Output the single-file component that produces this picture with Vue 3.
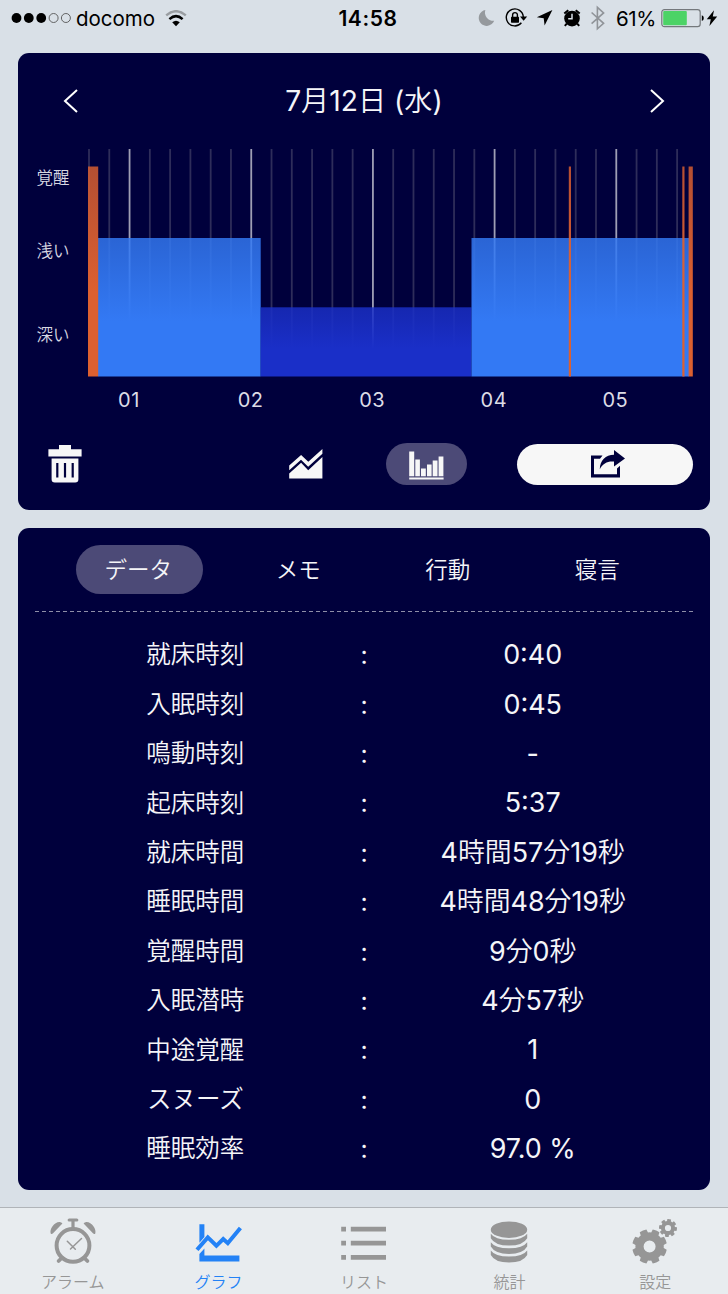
<script setup>
import { ref } from 'vue'

const tabs = ['データ', 'メモ', '行動', '寝言']
const activeTab = ref(0)

const rows = [
    { label: '就床時刻', value: '0:40' },
    { label: '入眠時刻', value: '0:45' },
    { label: '鳴動時刻', value: '-' },
    { label: '起床時刻', value: '5:37' },
    { label: '就床時間', value: '4時間57分19秒' },
    { label: '睡眠時間', value: '4時間48分19秒' },
    { label: '覚醒時間', value: '9分0秒' },
    { label: '入眠潜時', value: '4分57秒' },
    { label: '中途覚醒', value: '1' },
    { label: 'スヌーズ', value: '0' },
    { label: '睡眠効率', value: '97.0 %' }
]

// units are set a little lighter than the digits
const split = (text) => text.split(/([月日水時間分秒]+)/).filter(Boolean)
const isUnit = (part) => /[月日水時間分秒]/.test(part)

// one line every 10 minutes, the full hours are brighter
const gridLines = Array.from({ length: 30 }, (_, i) => ({
    x: 71 + i * 20.28,
    major: i % 6 === 2
}))

const hours = ['01', '02', '03', '04', '05'].map((text, i) => ({
    text,
    x: 111 + i * 121.6
}))

const levels = [
    { text: '覚醒', y: 43.5 },
    { text: '浅い', y: 116.5 },
    { text: '深い', y: 200.5 }
]

const bars = [
    { x: 80, width: 162.7, y: 98, type: 'light' },
    { x: 242.7, width: 210.8, y: 167.3, type: 'deep' },
    { x: 453.5, width: 217.5, y: 98, type: 'light' },
    { x: 70, width: 10.2, y: 26.5, type: 'awake' },
    { x: 550.8, width: 2.2, y: 26.5, type: 'awake' },
    { x: 664.3, width: 2.2, y: 26.5, type: 'awake' },
    { x: 670.6, width: 4.2, y: 26.5, type: 'awake' }
]

const gear = (cx, cy, outer, inner, hole, offset) => {
    const point = (r, deg) => {
        const a = deg * Math.PI / 180
        return `${(cx + r * Math.cos(a)).toFixed(2)} ${(cy + r * Math.sin(a)).toFixed(2)}`
    }
    let d = ''
    for (let i = 0; i < 8; i++) {
        const a = offset + i * 45
        d += `${i ? 'L' : 'M'}${point(inner, a - 16)}L${point(outer, a - 12)}`
        d += `A${outer} ${outer} 0 0 1 ${point(outer, a + 12)}L${point(inner, a + 16)}`
        d += `A${inner} ${inner} 0 0 1 ${point(inner, a + 29)}`
    }
    d += `ZM${cx - hole} ${cy}a${hole} ${hole} 0 1 0 ${hole * 2} 0a${hole} ${hole} 0 1 0 ${-hole * 2} 0Z`
    return d
}

const gears = [
    gear(21.6, 31.5, 17.4, 14.2, 6, 22.5),
    gear(40, 13, 9, 7, 3.1, 8)
]

const menu = [
    { name: 'alarm', label: 'アラーム' },
    { name: 'graph', label: 'グラフ' },
    { name: 'list', label: 'リスト' },
    { name: 'stats', label: '統計' },
    { name: 'settings', label: '設定' }
]
const activeMenu = ref('graph')
</script>

<template>
    <div class="app">
        <header class="status">
            <div class="status__left">
                <svg width="62" height="14" viewBox="0 0 62 14">
                    <circle cx="5.5" cy="7" r="4.9" />
                    <circle cx="17.8" cy="7" r="4.9" />
                    <circle cx="30.2" cy="7" r="4.9" />
                    <circle cx="42.6" cy="7" r="4.5" class="status__ring" />
                    <circle cx="54.9" cy="7" r="4.5" class="status__ring" />
                </svg>
                <span class="status__carrier">docomo</span>
                <svg width="22" height="17" viewBox="0 0 22 17">
                    <path d="M1.2 5.4Q11-3 20.8 5.4" fill="none" stroke="#999da1" stroke-width="2.4" />
                    <path d="M4.4 9.1Q11 3.2 17.6 9.1" fill="none" stroke="#000" stroke-width="2.5" />
                    <path d="M7.2 12.3Q11 9 14.8 12.3L11 16.2Z" />
                </svg>
            </div>
            <div class="status__time">14:58</div>
            <div class="status__right">
                <svg class="status__icons" width="130" height="26" viewBox="0 0 130 26">
                    <path d="M7.4 5A8 8 0 1 0 16.2 15.8A8.2 8.2 0 0 1 7.4 5Z" fill="#95999d" />
                    <path d="M43.4 17.8A8.5 8.5 0 1 1 45.3 12" fill="none" stroke="#000" stroke-width="1.4" />
                    <path d="M42 11.6h7.2l-3.6 4.2Z" />
                    <rect x="33" y="11.7" width="8" height="6" rx=".6" />
                    <path d="M34.6 12v-2a2.4 2.4 0 0 1 4.8 0v2" fill="none" stroke="#000" stroke-width="1.4" />
                    <path d="M74.4 5L66.6 20.6L65.7 13.2L58.8 12.2Z" />
                    <circle cx="94" cy="13.6" r="7.8" />
                    <path d="M94 8.8v5h-3.8" fill="none" stroke="#d9e0e7" stroke-width="1.5" />
                    <path d="M88.8 18.6l-2 2.3M99.2 18.6l2 2.3M86.3 8.6l4-3.4M101.7 8.6l-4-3.4" stroke="#000" stroke-width="2" />
                    <path d="M113.6 7.5l12 10.8-6.2 5.5V2.4l6.2 5.5-12 10.8" fill="none" stroke="#909499" stroke-width="1.6" />
                </svg>
                <span class="status__percent">61%</span>
                <svg width="58" height="20" viewBox="0 0 58 20">
                    <rect x=".8" y="1.6" width="38.4" height="17" rx="2.6" fill="none" stroke="#74787c" stroke-width="1.2" />
                    <rect x="2.2" y="3" width="23.6" height="14.2" rx="1" fill="#4cd366" />
                    <path d="M40.8 7.2q2 .6 2 2.9t-2 2.9Z" />
                    <path d="M53 2.2L45.8 11.2h4L48.4 17.9L56.2 8.6h-4.4Z" />
                </svg>
            </div>
        </header>

        <section class="card card--graph">
            <div class="date">
                <svg width="16" height="26" viewBox="0 0 16 26">
                    <path d="M14 2L2 13l12 11" />
                </svg>
                <span class="date__text"><span v-for="(part, i) in split('7月12日 (水)')" :key="i" :class="{ unit: isUnit(part) }">{{ part }}</span></span>
                <svg width="16" height="26" viewBox="0 0 16 26">
                    <path d="M2 2l12 11L2 24" />
                </svg>
            </div>

            <svg class="chart" width="692" height="290" viewBox="0 0 692 290">
                <defs>
                    <linearGradient id="light" x1="0" y1="0" x2="0" y2="1">
                        <stop offset="0" stop-color="#3379f4" stop-opacity=".83" />
                        <stop offset=".6" stop-color="#3379f4" />
                    </linearGradient>
                    <linearGradient id="deep" x1="0" y1="0" x2="0" y2="1">
                        <stop offset="0" stop-color="#1a2fc8" stop-opacity=".83" />
                        <stop offset=".6" stop-color="#1a2fc8" />
                    </linearGradient>
                    <linearGradient id="awake" x1="0" y1="0" x2="0" y2="1">
                        <stop offset="0" stop-color="#dc6030" stop-opacity=".82" />
                        <stop offset=".6" stop-color="#dc6030" />
                    </linearGradient>
                </defs>
                <rect
                    v-for="line in gridLines"
                    :key="line.x"
                    :x="line.x - 0.9"
                    y="9"
                    width="1.8"
                    height="226"
                    :fill="line.major ? '#fff' : '#fffbe6'"
                    :fill-opacity="line.major ? 0.62 : 0.18"
                />
                <rect
                    v-for="bar in bars"
                    :key="bar.x"
                    :x="bar.x"
                    :y="bar.y"
                    :width="bar.width"
                    :height="236.5 - bar.y"
                    :fill="`url(#${bar.type})`"
                />
                <text v-for="level in levels" :key="level.text" class="chart__level" x="18.5" :y="level.y">{{ level.text }}</text>
                <text v-for="hour in hours" :key="hour.text" class="chart__hour" :x="hour.x" y="267.4">{{ hour.text }}</text>
            </svg>

            <div class="tools">
                <svg class="tools__trash" width="34" height="38" viewBox="0 0 34 38">
                    <path d="M11 0h12v4.2h10.6v7.2H.4V4.2H11Z" />
                    <path fill-rule="evenodd" d="M3.6 13.4h26.8v20.8a3.2 3.2 0 0 1-3.2 3.2H6.8a3.2 3.2 0 0 1-3.2-3.2ZM8.2 18v14.6h2.2V18ZM15.9 18v14.6h2.2V18ZM23.6 18v14.6h2.2V18Z" />
                </svg>
                <svg class="tools__area" width="34" height="30" viewBox="0 0 34 30">
                    <path d="M.2 16.6L12.1 6l7.2 6.8L33.4 0v4.8L19.2 17.8l-7.2-7L.2 21.2Z" />
                    <path d="M.2 24.4L12.1 13.8l7.1 7.4L33.4 8v21.4H.2Z" />
                </svg>
                <button class="tools__bars">
                    <svg width="35" height="29" viewBox="0 0 35 29">
                        <path d="M.2.4h5v24.8h-5ZM6.3 8.6h4.6v16.6H6.3ZM12 17.4h4.8v7.8H12ZM18 13.4h4.6v11.8H18ZM23.7 9.4h4.8v15.8h-4.8ZM29.6 5.6h4.8v19.6h-4.8ZM.2 26.4h34.4v2.2H.2Z" />
                    </svg>
                </button>
                <button class="tools__share">
                    <svg width="34" height="28" viewBox="0 0 34 28">
                        <path d="M11.5 5.4H0v22h29V15.8l-3 2.6v5.8H3V8.8h6Z" />
                        <path d="M23 0l11 8.4L23 16.6v-5C16.4 11 12 13.4 8.8 19.2C9 10.4 14.6 5 23 4.8Z" />
                    </svg>
                </button>
            </div>
        </section>

        <section class="card card--data">
            <nav class="tabs">
                <button
                    v-for="(tab, index) in tabs"
                    :key="tab"
                    class="tabs__item"
                    :class="{ 'tabs__item--active': index === activeTab }"
                    @click="activeTab = index"
                >
                    {{ tab }}
                </button>
            </nav>
            <div class="divider"></div>
            <div class="rows">
                <div v-for="row in rows" :key="row.label" class="rows__row">
                    <span class="rows__label">{{ row.label }}</span>
                    <span class="rows__colon">:</span>
                    <span class="rows__value"><span v-for="(part, i) in split(row.value)" :key="i" :class="{ unit: isUnit(part) }">{{ part }}</span></span>
                </div>
            </div>
        </section>

        <nav class="menu">
            <div
                v-for="item in menu"
                :key="item.name"
                class="menu__item"
                :class="{ 'menu__item--active': item.name === activeMenu }"
                @click="activeMenu = item.name"
            >
                <svg width="54" height="54" viewBox="0 0 54 54">
                    <g v-if="item.name === 'alarm'" fill="none" stroke="currentColor">
                        <circle cx="27" cy="30.4" r="16.4" stroke-width="4" />
                        <path d="M27 14V6.5M23.2 5h7.6" stroke-width="3.2" stroke-linecap="round" />
                        <path d="M15.6 43l-3 3M38.4 43l3 3" stroke-width="3.8" stroke-linecap="round" />
                        <path d="M21.3 26.3l8 8M35.5 23.5L24.5 34" stroke-width="1.5" stroke-linecap="round" />
                        <path d="M4.8 18.8C3 14 9 6.2 14.4 7.2q1.6.4 2 1.4L6.8 18.6q-1 .8-2 .2ZM49.2 18.8C51 14 45 6.2 39.6 7.2q-1.6.4-2 1.4l9.6 10q1 .8 2 .2Z" fill="currentColor" stroke="none" />
                    </g>
                    <g v-else-if="item.name === 'graph'">
                        <path d="M8.4 9.3h5v12.6l-5 5.9ZM8.4 39l5-5.5v7H48.4V46.4h-40Z" fill="currentColor" />
                        <path d="M6 34.8L16.8 22.4l8.6 8.4 6.8-6.8 4.6 4.2L49.4 13" fill="none" stroke="currentColor" stroke-width="4" />
                    </g>
                    <path v-else-if="item.name === 'list'" d="M4.2 11.8h4.8v4.8H4.2ZM4.2 25.8h4.8v4.8H4.2ZM4.2 40h4.8v4.8H4.2ZM13.8 11.8h35.2v4.8H13.8ZM13.8 25.8h35.2v4.8H13.8ZM13.8 40h35.2v4.8H13.8Z" fill="currentColor" />
                    <g v-else-if="item.name === 'stats'" fill="currentColor">
                        <ellipse cx="26" cy="14.7" rx="18.2" ry="8.3" />
                        <path d="M7.8 18.8Q12 24.8 26 24.8T44.2 18.8V23.2Q40 30.6 26 30.6T7.8 23.2Z" />
                        <path d="M7.8 27.2Q12 33.2 26 33.2T44.2 27.2V31.6Q40 39 26 39T7.8 31.6Z" />
                        <path d="M7.8 35.6Q12 41.6 26 41.6T44.2 35.6V40Q40 47.6 26 47.6T7.8 40Z" />
                    </g>
                    <g v-else fill="currentColor" fill-rule="evenodd">
                        <path v-for="d in gears" :key="d" :d="d" />
                    </g>
                </svg>
                <span>{{ item.label }}</span>
            </div>
        </nav>
    </div>
</template>

<style>
body {
    margin: 0;
    background: #d9e0e7;
}
</style>

<style scoped>
.app {
    width: 728px;
    height: 1294px;
    display: flex;
    flex-direction: column;
    background: #d9e0e7;
    font-family: Inter, "Noto Sans CJK JP", sans-serif;
    overflow: hidden;
}

.app svg {
    display: block;
    flex-shrink: 0;
}

button {
    border: 0;
    padding: 0;
    font: inherit;
    color: inherit;
    background: none;
}

.status {
    height: 36px;
    padding: 0 9px 0 11px;
    display: grid;
    grid-template-columns: 1fr auto 1fr;
    align-items: center;
    font-size: 20.5px;
    color: #000;
}

.status__left,
.status__right {
    display: flex;
    align-items: center;
}

.status__ring {
    fill: none;
    stroke: #555;
    stroke-width: 0.9;
}

.status__carrier {
    width: 89px;
    padding-left: 3px;
}

.status__time {
    padding-left: 6px;
    font-size: 21px;
    font-weight: 600;
    letter-spacing: 0.6px;
}

.status__right {
    justify-content: flex-end;
}

.status__icons {
    margin-right: 8px;
}

.status__percent {
    width: 45px;
    font-size: 20.5px;
    letter-spacing: -0.4px;
    white-space: nowrap;
}

.unit {
    font-weight: 350;
}

.card {
    margin: 0 18px;
    border-radius: 11px;
    background: #00003c;
    color: #f5f5f8;
}

.card--graph {
    height: 457px;
    margin-top: 17px;
}

.date {
    height: 87px;
    padding: 8px 45px 0;
    box-sizing: border-box;
    display: flex;
    align-items: center;
    justify-content: space-between;
    font-size: 28.2px;
    line-height: 36px;
}

.date svg {
    fill: none;
    stroke: #fff;
    stroke-width: 2;
}

.date__text {
    margin-top: 1px;
    white-space: pre;
}

.chart__level {
    font-size: 16.5px;
    font-weight: 350;
    fill: #d8d8e2;
}

.chart__hour {
    font-size: 20px;
    letter-spacing: 0.5px;
    text-anchor: middle;
    fill: #dcdce6;
}

.tools {
    height: 68px;
    padding: 0 17px 0 30px;
    display: flex;
    align-items: center;
    fill: #f7f7f7;
}

.tools__area {
    margin-left: 207px;
}

.tools__bars {
    width: 81px;
    height: 42px;
    margin-left: 63px;
    border-radius: 21px;
    background: #4c4a77;
    display: flex;
    align-items: center;
    justify-content: center;
    fill: #f7f7f7;
}

.tools__bars svg {
    margin-top: 2px;
}

.tools__share {
    width: 176px;
    height: 41px;
    margin-left: 50px;
    border-radius: 21px;
    background: #f7f7f7;
    display: flex;
    align-items: center;
    justify-content: center;
    padding-left: 6px;
    fill: #00003c;
}

.card--data {
    height: 662.5px;
    margin-top: 17.5px;
}

.tabs {
    padding-top: 17.5px;
    display: flex;
    justify-content: center;
    gap: 40.5px;
}

.tabs__item {
    width: 109px;
    height: 49px;
    padding-bottom: 4px;
    border-radius: 25px;
    font-size: 22.5px;
    font-weight: 350;
    text-align: center;
}

.tabs__item--active {
    width: 127px;
    padding-right: 3px;
    background: #4c4a77;
}

.divider {
    height: 1px;
    margin: 17px 17px 0;
    background: repeating-linear-gradient(90deg, #8e8ea8 0 4px, transparent 4px 7.03px);
}

.rows {
    padding: 18px 93px 0;
}

.rows__row {
    height: 49.4px;
    display: grid;
    grid-template-columns: repeat(3, minmax(0, 1fr));
    align-items: center;
    justify-items: center;
    line-height: 1;
}

.rows__label {
    font-size: 24.5px;
    font-weight: 350;
}

.rows__colon {
    padding-top: 2px;
    font-size: 25px;
}

.rows__value {
    font-size: 26.9px;
    white-space: nowrap;
}

/* the longest durations are wider than their column */
.rows__row > * {
    margin: 0 -12px;
}

.menu {
    height: 87px;
    margin-top: auto;
    box-sizing: border-box;
    border-top: 1px solid #b0b4b8;
    background: #e8ecef;
    display: grid;
    grid-template-columns: repeat(5, 1fr);
}

.menu__item {
    padding-top: 7px;
    display: flex;
    flex-direction: column;
    align-items: center;
    font-size: 16px;
    font-weight: 350;
    line-height: 26px;
    color: #969696;
}

.menu__item--active {
    color: #2382f6;
}
</style>
